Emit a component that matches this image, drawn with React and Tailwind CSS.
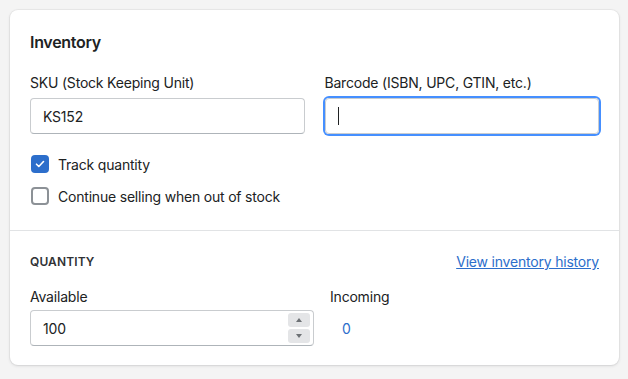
import React from "react";

function Checkbox({ checked }) {
  return checked ? (
    <span className="flex h-[18px] w-[18px] items-center justify-center rounded-[4px] bg-[#2c6ecb]">
      <svg width="12" height="12" viewBox="0 0 12 12" fill="none">
        <path d="M2.5 6.2l2.3 2.3 4.7-5" stroke="white" strokeWidth="1.6" strokeLinecap="round" strokeLinejoin="round" />
      </svg>
    </span>
  ) : (
    <span className="h-[18px] w-[18px] rounded-[4px] border-2 border-[#8c9196] bg-white" />
  );
}

export default function App() {
  return (
    <div
      className="min-h-[379px] w-[628px] bg-[#f4f4f4] pt-[10px] pl-[10px] text-[#202223] tracking-[-0.2px]"
      style={{ fontFamily: "Inter, 'Noto Sans', sans-serif" }}
    >
      <div className="w-[609px] rounded-[8px] bg-white shadow-[0_0_0_1px_rgba(63,63,68,0.05),0_1px_3px_0_rgba(63,63,68,0.15)]">
        <div className="px-5 pt-5 pb-[24px]">
          <h2 className="text-[16px] font-semibold leading-[24px] tracking-[-0.3px]">Inventory</h2>
          <div className="mt-[19px] grid grid-cols-2 gap-5">
            <div>
              <div className="text-[14px] leading-[20px]">SKU (Stock Keeping Unit)</div>
              <div className="mt-[5px] flex h-[36px] items-center rounded-[4px] border border-[#c9cccf] border-b-[#aeb4b9] px-3 text-[14px]">
                KS152
              </div>
            </div>
            <div>
              <div className="text-[14px] leading-[20px]">Barcode (ISBN, UPC, GTIN, etc.)</div>
              <div className="mt-[5px] flex h-[36px] items-center rounded-[4px] border border-[#c9cccf] px-3 text-[14px] ring-2 ring-[#458fff] ring-offset-0">
                <span className="h-[18px] w-px bg-[#202223]" />
              </div>
            </div>
          </div>
          <div className="mt-[20px] flex flex-col gap-3">
            <label className="flex h-[20px] items-center gap-[9px] pl-px text-[14px]">
              <Checkbox checked />
              Track quantity
            </label>
            <label className="flex h-[20px] items-center gap-[9px] pl-px text-[14px]">
              <Checkbox />
              Continue selling when out of stock
            </label>
          </div>
        </div>
        <div className="border-t border-[#e1e3e5] px-5 pt-[21px] pb-[19px]">
          <div className="flex items-center justify-between">
            <span className="text-[12px] font-semibold uppercase leading-[20px] tracking-[0.01em] text-[#303235]">Quantity</span>
            <a className="text-[14px] leading-[20px] text-[#2c6ecb] underline">View inventory history</a>
          </div>
          <div className="mt-[15px] flex gap-4">
            <div className="w-[284px]">
              <div className="text-[14px] leading-[20px]">Available</div>
              <div className="mt-[3px] flex h-[36px] items-center justify-between rounded-[4px] border border-[#c9cccf] border-b-[#aeb4b9] pl-3 pr-[3px] text-[14px]">
                <span>100</span>
                <div className="flex flex-col gap-[2px]">
                  <span className="flex h-[14px] w-[22px] items-center justify-center rounded-[3px] bg-[#e4e5e7]">
                    <svg width="6" height="4" viewBox="0 0 6 4"><path d="M0 4L3 0L6 4Z" fill="#6d7175" /></svg>
                  </span>
                  <span className="flex h-[14px] w-[22px] items-center justify-center rounded-[3px] bg-[#e4e5e7]">
                    <svg width="6" height="4" viewBox="0 0 6 4"><path d="M0 0L3 4L6 0Z" fill="#6d7175" /></svg>
                  </span>
                </div>
              </div>
            </div>
            <div>
              <div className="text-[14px] leading-[20px]">Incoming</div>
              <div className="mt-[3px] flex h-[36px] items-center pl-3 text-[14px] text-[#2c6ecb]">0</div>
            </div>
          </div>
        </div>
      </div>
    </div>
  );
}
